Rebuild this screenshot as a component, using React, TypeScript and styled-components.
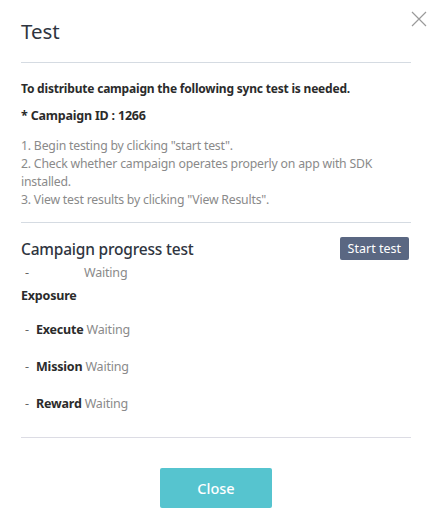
import styled, { createGlobalStyle } from 'styled-components';

const GlobalStyle = createGlobalStyle`
  html, body {
    margin: 0;
    padding: 0;
    background: #fff;
  }
  body {
    font-family: 'Noto Sans', 'Open Sans', sans-serif;
    color: #333;
  }
`;

const Modal = styled.div`
  position: relative;
  width: 438px;
  height: 520px;
  box-sizing: border-box;
  padding: 0 27px 0 21px;
  background: #fff;
`;

const CloseIcon = styled.button`
  position: absolute;
  top: 10px;
  right: 10px;
  width: 18px;
  height: 18px;
  padding: 0;
  border: none;
  background: transparent;
  cursor: pointer;
`;

const Title = styled.h2`
  margin: 0;
  padding-top: 19px;
  height: 62px;
  box-sizing: border-box;
  font-size: 20.5px;
  font-weight: 400;
  line-height: 24px;
  color: #2f3540;
`;

const Divider = styled.hr<{ $light?: boolean }>`
  margin: 0;
  border: none;
  border-top: 1px solid ${(p) => (p.$light ? '#dcdce4' : '#d5dbe2')};
`;

const Intro = styled.p`
  margin: 17px 0 0;
  font-size: 12px;
  font-weight: 700;
  line-height: 18px;
  color: #2b2b2b;
  letter-spacing: -0.2px;
`;

const CampaignId = styled(Intro)`
  margin-top: 9px;
  font-size: 12.5px;
`;

const Steps = styled.div`
  margin: 12px 0 13px;
  font-size: 12.25px;
  line-height: 18px;
  color: #8a8a8a;
  letter-spacing: -0.2px;
`;

const SectionHead = styled.div`
  display: flex;
  align-items: center;
  justify-content: space-between;
  margin-top: 14px;
  padding-right: 2px;
`;

const SectionTitle = styled.h3`
  margin: 0;
  font-size: 15.5px;
  font-weight: 500;
  color: #2f3540;
  letter-spacing: -0.2px;
`;

const SmallButton = styled.button`
  height: 23px;
  padding: 0 8px;
  border: none;
  border-radius: 2px;
  background: #5a6782;
  color: #fff;
  font-family: inherit;
  font-size: 12.5px;
  cursor: pointer;
`;

const Row = styled.div<{ $gap?: number; $top?: number }>`
  display: flex;
  align-items: center;
  gap: ${(p) => p.$gap ?? 4}px;
  margin-top: ${(p) => p.$top ?? 0}px;
  font-size: 12.5px;
  line-height: 18px;
  letter-spacing: -0.2px;
`;

const Dash = styled.span<{ $width: number }>`
  width: ${(p) => p.$width}px;
  padding-left: 4px;
  box-sizing: border-box;
  color: #666;
`;

const Status = styled.span`
  color: #8a8a8a;
`;

const Label = styled.span`
  font-weight: 700;
  color: #2b2b2b;
`;

const StatusList = styled.div`
  display: flex;
  flex-direction: column;
  gap: 19px;
  margin: 16px 0 24px;
`;

const Footer = styled.div`
  display: flex;
  justify-content: center;
  padding-top: 30px;
`;

const PrimaryButton = styled.button`
  width: 112px;
  height: 40px;
  border: none;
  border-radius: 2px;
  background: #56c4cf;
  color: #fff;
  font-family: inherit;
  font-size: 14.5px;
  font-weight: 500;
  cursor: pointer;
`;

const steps = [
  '1. Begin testing by clicking "start test".',
  '2. Check whether campaign operates properly on app with SDK installed.',
  '3. View test results by clicking "View Results".',
];

const checks = ['Execute', 'Mission', 'Reward'];

export default function App() {
  return (
    <>
      <GlobalStyle />
      <Modal>
        <CloseIcon aria-label="close">
          <svg width="18" height="18" viewBox="0 0 18 18">
            <path d="M2 2 L16 16 M16 2 L2 16" stroke="#9a9a9a" strokeWidth="1.2" />
          </svg>
        </CloseIcon>
        <Title>Test</Title>
        <Divider />
        <Intro>To distribute campaign the following sync test is needed.</Intro>
        <CampaignId>* Campaign ID : 1266</CampaignId>
        <Steps>
          {steps.map((s) => (
            <div key={s}>{s}</div>
          ))}
        </Steps>
        <Divider />
        <SectionHead>
          <SectionTitle>Campaign progress test</SectionTitle>
          <SmallButton>Start test</SmallButton>
        </SectionHead>
        <Row $gap={0} $top={4}>
          <Dash $width={63}>-</Dash>
          <Status>Waiting</Status>
        </Row>
        <Row $top={5}>
          <Label>Exposure</Label>
        </Row>
        <StatusList>
          {checks.map((c) => (
            <Row key={c} $gap={0}>
              <Dash $width={15}>-</Dash>
              <Label>{c}</Label>
              <Status>&nbsp;Waiting</Status>
            </Row>
          ))}
        </StatusList>
        <Divider $light />
        <Footer>
          <PrimaryButton>Close</PrimaryButton>
        </Footer>
      </Modal>
    </>
  );
}
